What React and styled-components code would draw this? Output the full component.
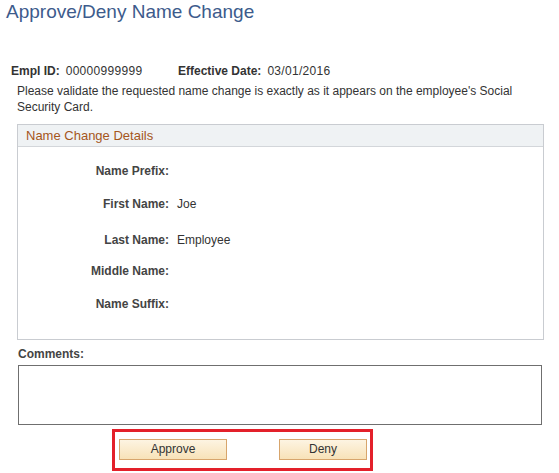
import React from "react"
import styled, { createGlobalStyle } from "styled-components"

const GlobalStyle = createGlobalStyle`
  body {
    margin: 0;
    background: #fff;
    font-family: "Liberation Sans", Arial, sans-serif;
    color: #333;
  }
`

const fields = [
  { label: "Name Prefix:", value: "", h: 30 },
  { label: "First Name:", value: "Joe", h: 36 },
  { label: "Last Name:", value: "Employee", h: 36 },
  { label: "Middle Name:", value: "", h: 26 },
  { label: "Name Suffix:", value: "", h: 40 },
]

function App() {
  return (
    <Page>
      <GlobalStyle />
      <Title>Approve/Deny Name Change</Title>
      <InfoRow>
        <Info $width={167}>
          <InfoLabel>Empl ID:</InfoLabel>
          <InfoValue>00000999999</InfoValue>
        </Info>
        <Info>
          <InfoLabel>Effective Date:</InfoLabel>
          <InfoValue>03/01/2016</InfoValue>
        </Info>
      </InfoRow>
      <Instructions>
        Please validate the requested name change is exactly as it appears on the employee's Social
        Security Card.
      </Instructions>
      <GroupBox>
        <GroupHeader>Name Change Details</GroupHeader>
        <GroupBody>
          {fields.map((f) => (
            <FieldRow key={f.label} $h={f.h}>
              <FieldLabel>{f.label}</FieldLabel>
              <FieldValue>{f.value}</FieldValue>
            </FieldRow>
          ))}
        </GroupBody>
      </GroupBox>
      <CommentsLabel>Comments:</CommentsLabel>
      <Comments />
      <ButtonBar>
        <Button $width={108}>Approve</Button>
        <Button $width={88}>Deny</Button>
      </ButtonBar>
    </Page>
  )
}

export default App

const Page = styled.div`
  width: 559px;
  height: 473px;
  overflow: hidden;
`

const Title = styled.h1`
  margin: 0 0 0 6px;
  font-size: 19px;
  line-height: 24px;
  font-weight: normal;
  color: #3d5b8c;
`

const InfoRow = styled.div`
  display: flex;
  margin: 40px 0 0 11px;
  font-size: 12px;
  line-height: 14px;
`

const Info = styled.div`
  display: flex;
  gap: 6px;
  width: ${(p) => (p.$width ? `${p.$width}px` : "auto")};
`

const InfoLabel = styled.span`
  font-weight: bold;
  color: #333;
`

const InfoValue = styled.span`
  color: #333;
  letter-spacing: 0.3px;
`

const Instructions = styled.p`
  margin: 5px 0 0 17px;
  width: 526px;
  font-size: 12px;
  line-height: 16px;
`

const GroupBox = styled.div`
  margin: 9px 0 0 17px;
  width: 525px;
  border: 1px solid #c9ccd1;
`

const GroupHeader = styled.div`
  height: 21px;
  padding-left: 8px;
  background: #eff2f4;
  border-bottom: 1px solid #d3d6da;
  color: #a5561c;
  font-size: 13px;
  line-height: 21px;
`

const GroupBody = styled.div`
  padding: 9px 0 15px;
`

const FieldRow = styled.div`
  display: flex;
  align-items: center;
  height: ${(p) => p.$h}px;
  font-size: 12px;
`

const FieldLabel = styled.div`
  width: 151px;
  text-align: right;
  font-weight: bold;
  color: #444;
`

const FieldValue = styled.div`
  margin-left: 8px;
  color: #333;
`

const CommentsLabel = styled.div`
  margin: 7px 0 0 18px;
  font-size: 12px;
  line-height: 14px;
  font-weight: bold;
  color: #444;
`

const Comments = styled.div`
  margin: 4px 0 0 18px;
  width: 522px;
  height: 58px;
  border: 1px solid #6f6f6f;
`

const ButtonBar = styled.div`
  display: flex;
  gap: 52px;
  box-sizing: border-box;
  width: 261px;
  height: 42px;
  margin: 4px 0 0 112px;
  padding: 7px 0 0 4px;
  border: 3px solid #e3202a;
`

const Button = styled.div`
  width: ${(p) => p.$width}px;
  height: 21px;
  box-sizing: border-box;
  border: 1px solid #d7a56c;
  background: linear-gradient(#fdf4e2, #f8e2b8);
  color: #333;
  font-size: 12px;
  line-height: 19px;
  text-align: center;
`
